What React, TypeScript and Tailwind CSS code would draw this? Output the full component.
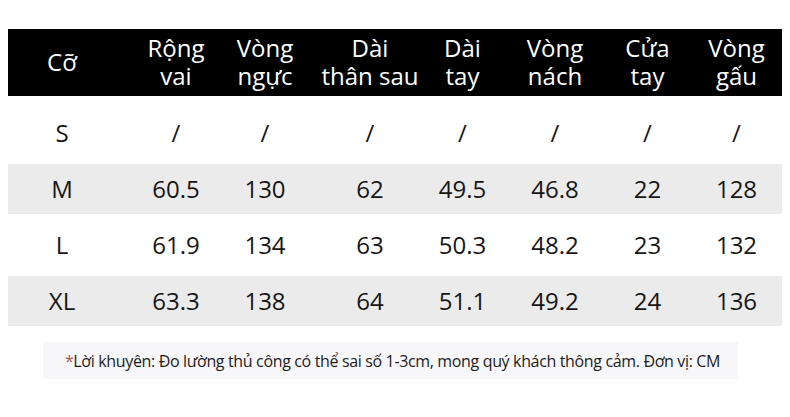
import React from 'react';

const font = { fontFamily: '"Open Sans", "Noto Sans", sans-serif' };

const grid = 'grid grid-cols-[111px_101px_97px_99px_93px_92px_91px_90px]';

// small nudges so each column's centre matches the picture
const shift = ['pr-[3px]', 'pl-[13px]', 'pr-[7px]', 'pl-[7px]', '', '', 'pl-[2px]', 'pr-[1px]'];

const headers = [
  ['Cỡ'],
  ['Rộng', 'vai'],
  ['Vòng', 'ngực'],
  ['Dài', 'thân sau'],
  ['Dài', 'tay'],
  ['Vòng', 'nách'],
  ['Cửa', 'tay'],
  ['Vòng', 'gấu'],
];

const rows = [
  ['S', '/', '/', '/', '/', '/', '/', '/'],
  ['M', '60.5', '130', '62', '49.5', '46.8', '22', '128'],
  ['L', '61.9', '134', '63', '50.3', '48.2', '23', '132'],
  ['XL', '63.3', '138', '64', '51.1', '49.2', '24', '136'],
];

export default function App() {
  return (
    <div className="w-[790px] h-[417px] bg-white overflow-hidden pt-[29px]" style={font}>
      <div className={`${grid} mx-[8px] h-[67px] bg-black text-white text-[24px] leading-[28px]`}>
        {headers.map((h, i) => (
          <div key={i} className={`flex flex-col items-center justify-center pb-[2px] ${shift[i]}`}>
            {h.map((line) => (
              <span key={line} className="whitespace-nowrap">{line}</span>
            ))}
          </div>
        ))}
      </div>

      <div className="mt-[12px] mx-[8px] flex flex-col gap-[6px]">
        {rows.map((r, ri) => (
          <div key={r[0]} className={`${grid} h-[50px] text-[24px] text-[#161616] ${ri % 2 === 1 ? 'bg-[#ebebeb]' : ''}`}>
            {r.map((v, i) => (
              <div key={i} className={`flex items-center justify-center whitespace-nowrap ${shift[i]}`}>
                {v}
              </div>
            ))}
          </div>
        ))}
      </div>

      <div className="mt-[16px] ml-[43px] w-[695px] h-[37px] bg-[#f7f7f9] flex items-center justify-center pl-[4px] text-[16px] text-[#1c1c1c] tracking-[-0.35px] whitespace-nowrap">
        <span className="text-[#b5504a]">*</span>
        <span>Lời khuyên: Đo lường thủ công có thể sai số 1-3cm, mong quý khách thông cảm. Đơn vị: CM</span>
      </div>
    </div>
  );
}
